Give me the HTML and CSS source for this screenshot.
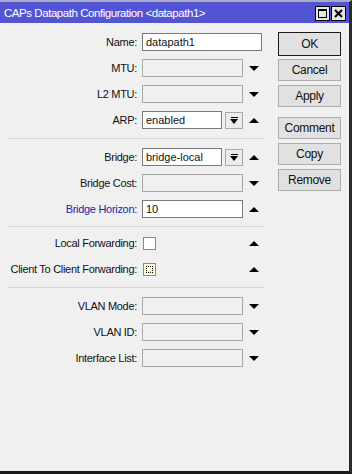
FILE: index.html
```html
<!DOCTYPE html>
<html>
<head>
    <title>CAPs Datapath Configuration</title>
    <link rel="stylesheet" href="styles.css">
</head>
<body>
<div class="window">
    <div class="titlebar">
        <span class="title">CAPs Datapath Configuration &lt;datapath1&gt;</span>
        <div class="tb-buttons">
            <span class="tb-btn"><span class="max-icon"></span></span>
            <span class="tb-btn">
                <svg width="9" height="9" viewBox="0 0 9 9"><path d="M1 1 L8 8 M8 1 L1 8" stroke="#000" stroke-width="2"/></svg>
            </span>
        </div>
    </div>

    <div class="content">
        <div class="form">
            <div class="row">
                <span class="lbl">Name:</span>
                <div class="field wide">datapath1</div>
            </div>
            <div class="row">
                <span class="lbl">MTU:</span>
                <div class="ctl"><div class="field off"></div></div>
                <span class="arrow down"></span>
            </div>
            <div class="row">
                <span class="lbl">L2 MTU:</span>
                <div class="ctl"><div class="field off"></div></div>
                <span class="arrow down"></span>
            </div>
            <div class="row">
                <span class="lbl">ARP:</span>
                <div class="ctl combo">
                    <div class="field short">enabled</div>
                    <span class="drop-btn"><span class="bar"></span><span class="tri"></span></span>
                </div>
                <span class="arrow up"></span>
            </div>

            <div class="sep"></div>

            <div class="row">
                <span class="lbl">Bridge:</span>
                <div class="ctl combo">
                    <div class="field short">bridge-local</div>
                    <span class="drop-btn"><span class="bar"></span><span class="tri"></span></span>
                </div>
                <span class="arrow up"></span>
            </div>
            <div class="row">
                <span class="lbl">Bridge Cost:</span>
                <div class="ctl"><div class="field off"></div></div>
                <span class="arrow down"></span>
            </div>
            <div class="row">
                <span class="lbl blue">Bridge Horizon:</span>
                <div class="ctl"><div class="field">10</div></div>
                <span class="arrow up"></span>
            </div>

            <div class="sep short-sep"></div>

            <div class="row">
                <span class="lbl">Local Forwarding:</span>
                <div class="ctl"><span class="check"></span></div>
                <span class="arrow up"></span>
            </div>
            <div class="row">
                <span class="lbl">Client To Client Forwarding:</span>
                <div class="ctl"><span class="check mixed"><span class="dots"></span></span></div>
                <span class="arrow up"></span>
            </div>

            <div class="sep"></div>

            <div class="row">
                <span class="lbl">VLAN Mode:</span>
                <div class="ctl"><div class="field off"></div></div>
                <span class="arrow down"></span>
            </div>
            <div class="row">
                <span class="lbl">VLAN ID:</span>
                <div class="ctl"><div class="field off"></div></div>
                <span class="arrow down"></span>
            </div>
            <div class="row">
                <span class="lbl">Interface List:</span>
                <div class="ctl"><div class="field off"></div></div>
                <span class="arrow down"></span>
            </div>
        </div>

        <div class="actions">
            <button class="btn default">OK</button>
            <button class="btn">Cancel</button>
            <button class="btn">Apply</button>
            <button class="btn group">Comment</button>
            <button class="btn">Copy</button>
            <button class="btn">Remove</button>
        </div>
    </div>
</div>
</body>
</html>
```

FILE: styles.css
```css
body {
    margin: 0;
    font-family: "Liberation Sans", Arial, sans-serif;
    font-size: 11px;
    color: #111;
    background: #f0f0f0;
}

.window {
    width: 352px;
    height: 474px;
    box-sizing: border-box;
    background: #f0f0f0;
    border-top: 2px solid #a9aac4;
    border-right: 3px solid #2a2a2a;
    border-bottom: 3px solid #1a1a1a;
    overflow: hidden;
}

.titlebar {
    height: 21px;
    background: #5254d3;
    color: white;
    display: flex;
    align-items: center;
    padding-left: 4px;
}
.title {
    font-size: 11.5px;
    letter-spacing: -0.45px;
    flex: 1;
}
.tb-buttons {
    display: flex;
    gap: 1px;
    margin-right: 3px;
    margin-top: 2px;
}
.tb-btn {
    width: 13px;
    height: 13px;
    border: 1px solid #000;
    background: #e6e6e6;
    display: flex;
    align-items: center;
    justify-content: center;
}
.max-icon {
    width: 7px;
    height: 6px;
    border: 1px solid #000;
    border-top-width: 2px;
}

.content {
    display: flex;
}
.form {
    width: 270px;
    padding-top: 6px;
}

.row {
    display: flex;
    align-items: center;
    height: 26px;
}
.lbl {
    width: 137px;
    margin-right: 5px;
    text-align: right;
    white-space: nowrap;
    letter-spacing: -0.3px;
}
.blue { color: #2424a8; }

.ctl {
    width: 101px;
    display: flex;
    align-items: center;
}
.field {
    box-sizing: border-box;
    width: 101px;
    height: 18px;
    border: 1px solid #7a7a7a;
    background: white;
    padding: 2px 3px;
    line-height: 13px;
    white-space: nowrap;
    overflow: hidden;
}
.field.wide { width: 120px; }
.field.short { width: 80px; }
.field.off {
    background: #f0f0f0;
    border-color: #a8a8a8;
}

.drop-btn {
    box-sizing: border-box;
    width: 18px;
    height: 17px;
    margin-left: 3px;
    border: 1px solid #a8a8a8;
    background: #ececec;
    display: flex;
    flex-direction: column;
    align-items: center;
    justify-content: center;
}
.drop-btn .bar {
    width: 7px;
    height: 1px;
    background: #000;
    margin-bottom: 1px;
}
.drop-btn .tri {
    width: 0;
    height: 0;
    border-left: 4px solid transparent;
    border-right: 4px solid transparent;
    border-top: 5px solid #000;
}

.arrow {
    width: 0;
    height: 0;
    margin-left: 6px;
    border-left: 5px solid transparent;
    border-right: 5px solid transparent;
}
.arrow.down { border-top: 5px solid #000; }
.arrow.up { border-bottom: 5px solid #000; }

.check {
    box-sizing: border-box;
    width: 13px;
    height: 13px;
    border: 1px solid #8a8a8a;
    background: white;
    margin-left: 1px;
}
.check.mixed {
    background: #fffbd9;
    padding: 2px;
}
.check.mixed .dots {
    display: block;
    width: 7px;
    height: 7px;
    box-sizing: border-box;
    border: 1px dotted #000;
}

.sep {
    height: 11px;
    display: flex;
    align-items: center;
}
.sep::after {
    content: "";
    margin-left: 8px;
    width: 257px;
    height: 1px;
    background: #d6d6d6;
}
.short-sep { height: 8px; }

.actions {
    margin-left: 8px;
    padding-top: 9px;
    display: flex;
    flex-direction: column;
    gap: 4px;
}
.btn {
    width: 63px;
    height: 22px;
    font-family: "Liberation Sans", Arial, sans-serif;
    font-size: 12px;
    letter-spacing: -0.3px;
    color: #111;
    background: #e1e1e1;
    border: 1px solid #adadad;
    padding: 0;
}
.btn.default {
    height: 24px;
    border: 1px solid #1a1a1a;
    box-shadow: inset 0 0 0 1px #e1e1e1;
    margin-bottom: -1px;
}
.btn.group { margin-top: 6px; }
```
